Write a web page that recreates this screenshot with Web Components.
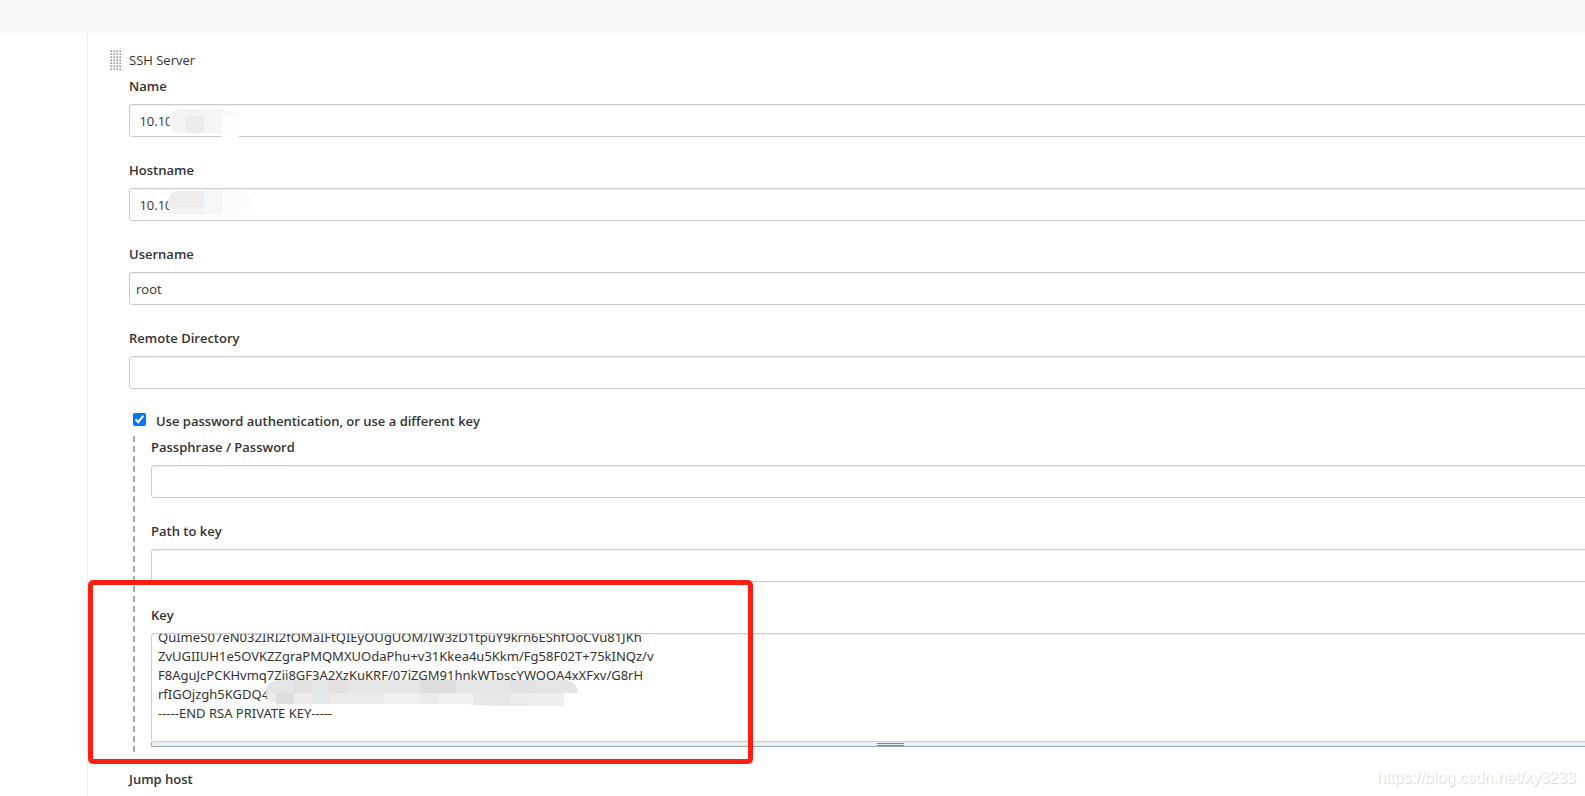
<!DOCTYPE html>
<html lang="en">
<head>
<meta charset="utf-8">
<title>SSH Server</title>
<style>
html, body { margin: 0; background: #fff; }
body { font: 13px/26px "Open Sans", "Noto Sans", sans-serif; color: #333; overflow: hidden; }
</style>
</head>
<body>
<config-page></config-page>
<script>
const define = (name, html, setup) => {
  const template = document.createElement('template');
  template.innerHTML = html;
  customElements.define(name, class extends HTMLElement {
    constructor() {
      super();
      this.attachShadow({ mode: 'open' }).append(template.content.cloneNode(true));
    }
    connectedCallback() { if (setup) setup(this, this.shadowRoot); }
  });
};

define('drag-handle', `
<style>
:host { display: block; width: 12px; height: 20px; }
svg { display: block; }
</style>
<svg width="12" height="20" aria-hidden="true">
  <defs><pattern id="dots" width="3" height="3" patternUnits="userSpaceOnUse">
    <rect width="2" height="2" fill="#ccc"/><rect x="1" y="1" width="1" height="1" fill="#888"/>
  </pattern></defs>
  <rect width="12" height="20" fill="url(#dots)"/>
</svg>`);

define('text-field', `
<style>
:host { display: block; position: relative; margin-bottom: 20px; }
label { display: block; font-weight: 600; margin-bottom: 5px; }
input { display: block; box-sizing: border-box; width: 100%; height: 33px; margin: 0; padding: 0 6px;
  border: 1px solid #ccc; border-radius: 3px; background: #fff;
  box-shadow: inset 0 1px 1px #eee; font: inherit; color: inherit; outline: none; }
::slotted(svg) { position: absolute; left: 37px; top: 30px; }
</style>
<label for="field"></label><input id="field" type="text"><slot></slot>`,
(host, root) => {
  root.querySelector('label').textContent = host.getAttribute('label');
  root.querySelector('input').value = host.getAttribute('value') || '';
});

define('key-field', `
<style>
:host { display: block; position: relative; }
label { display: block; font-weight: 600; margin-bottom: 5px; }
textarea { display: block; box-sizing: border-box; width: 100%; height: 109px; margin: 0; padding: 6px;
  border: 1px solid #ccc; border-radius: 3px; background: #fff;
  box-shadow: inset 0 1px 1px #eee; font: 13px/19px "Noto Sans", "Open Sans", sans-serif; color: inherit;
  resize: none; outline: none; white-space: pre; scrollbar-width: none; }
.grip { display: flex; flex-direction: column; align-items: center; justify-content: center; gap: 1px;
  height: 4px; border: solid #98a9b2; border-width: 0 0 1px 1px; background: #e8eef1; }
.grip i { width: 27px; height: 1px; background: #888; }
::slotted(svg) { position: absolute; left: 115px; top: 78px; }
</style>
<label for="key">Key</label>
<textarea id="key" spellcheck="false">QuIme507eN032IRI2fOMaIFtQIEyOUgUOM/IW3zD1tpuY9krn6EShfOoCVu81JKh
ZvUGIIUH1e5OVKZZgraPMQMXUOdaPhu+v31Kkea4u5Kkm/Fg58F02T+75kINQz/v
F8AguJcPCKHvmq7Zii8GF3A2XzKuKRF/07iZGM91hnkWTpscYWQQA4xXFxv/G8rH
rfIGOjzgh5KGDQ4
-----END RSA PRIVATE KEY-----
</textarea>
<div class="grip"><i></i><i></i></div><slot></slot>`,
(host, root) => { root.querySelector('textarea').scrollTop = 12; });

define('check-group', `
<style>
:host { display: block; }
.head { display: flex; align-items: flex-start; gap: 10px; height: 25px; padding-left: 4px; font-weight: 600; line-height: 24px; }
input { width: 13px; height: 13px; margin: 4px 0 0; accent-color: #0075ff; }
.body { padding: 0 0 5px 18px; margin-left: 4px;
  background: repeating-linear-gradient(#aaa 0 6px, transparent 6px 10px) 0 2px / 2px 100% no-repeat; }
</style>
<div class="head"><input id="use" type="checkbox" checked><label for="use">Use password authentication, or use a different key</label></div>
<div class="body"><slot></slot></div>`);

define('highlight-box', `
<style>
:host { position: absolute; z-index: 2; left: -63px; top: -22px; box-sizing: border-box;
  width: 665px; height: 184px; border: 5px solid #ff1e10; border-radius: 5px; pointer-events: none; }
</style>`);

define('config-page', `
<style>
:host { display: flex; flex-direction: column; height: 100vh; overflow: hidden; position: relative; }
header { flex: none; height: 33px; background: #f8f8f8; }
main { flex: 1; margin: 0 -43px 0 87px; padding: 14px 0 0 41px; border-left: 1px solid #eee; }
.title { display: flex; align-items: center; gap: 7px; margin-left: -19px; }
.annotated { position: relative; }
.jump { margin-top: 14px; font-weight: 600; }
.mark { position: absolute; right: 9px; bottom: 5px; font: 16px/26px "Liberation Sans", sans-serif;
  color: #fff; text-shadow: 1px 1px 1px #d4d4d4; }
</style>
<header></header>
<main>
  <div class="title"><drag-handle></drag-handle><span>SSH Server</span></div>
  <text-field label="Name" value=" 10.10">
    <svg width="76" height="38" aria-hidden="true">
      <path d="M15 6H51Q68 8 75 13H55V30H15Q3 30 3 18T15 6Z" fill="#f3f3f3"/>
      <path d="M20 13H38V30H20Z" fill="#ececeb"/>
      <path d="M38 6H51L56 7V32L50 30H38Z" fill="#f5f6f8"/>
      <path d="M56 8Q68 9 75 13H56Z" fill="#f9f9f9"/>
      <path d="M56 13H73V34H56Z" fill="#fefefe"/>
    </svg>
  </text-field>
  <text-field label="Hostname" value=" 10.10">
    <svg width="90" height="38" aria-hidden="true">
      <path d="M14 4H73Q86 4 86 16T73 28H14Q2 28 2 16T14 4Z" fill="#fcfcfd"/>
      <path d="M14 4H38V28H14Q2 28 2 16T14 4Z" fill="#f3f3f3"/>
      <path d="M14 4H38V20H3Q0 4 14 4Z" fill="#eeedec"/>
      <path d="M38 4H56V28H38Z" fill="#f6f7f9"/>
    </svg>
  </text-field>
  <text-field label="Username" value="root"></text-field>
  <text-field label="Remote Directory"></text-field>
  <check-group>
    <text-field label="Passphrase / Password"></text-field>
    <text-field label="Path to key"></text-field>
    <div class="annotated">
      <key-field>
        <svg width="314" height="28" aria-hidden="true">
          <path d="M12 0H296Q311 1 312 13H298V26H230L200 24H12Q0 22 0 12T12 0Z" fill="#ebebeb"/>
          <path d="M12 0H298Q311 1 312 13H0Q1 1 12 0Z" fill="#e4e5e5"/>
          <path d="M28 0H46V13H28Z" fill="#e3e0df"/>
          <path d="M64 0H82V13H64Z" fill="#e4e2e1"/>
          <path d="M154 0H190V13H154Z" fill="#dddddf"/>
          <path d="M244 0H270V13H244Z" fill="#e1e1e1"/>
          <path d="M10 13H28V24H10Z" fill="#dfdedd"/>
          <path d="M46 13H64V24H46Z" fill="#e5e7e9"/>
          <path d="M64 13H82V24H64Z" fill="#edebe9"/>
          <path d="M118 13H154V24H118Z" fill="#efefef"/>
          <path d="M172 13H208V24H172Z" fill="#eef0ef"/>
          <path d="M208 13H244V25H208Z" fill="#e7e7e7"/>
          <path d="M262 13H298V26H262Z" fill="#eee"/>
        </svg>
      </key-field>
      <highlight-box></highlight-box>
    </div>
  </check-group>
  <div class="jump">Jump host</div>
</main>
<div class="mark">https://blog.csdn.net/xy3233</div>`);
</script>
</body>
</html>
